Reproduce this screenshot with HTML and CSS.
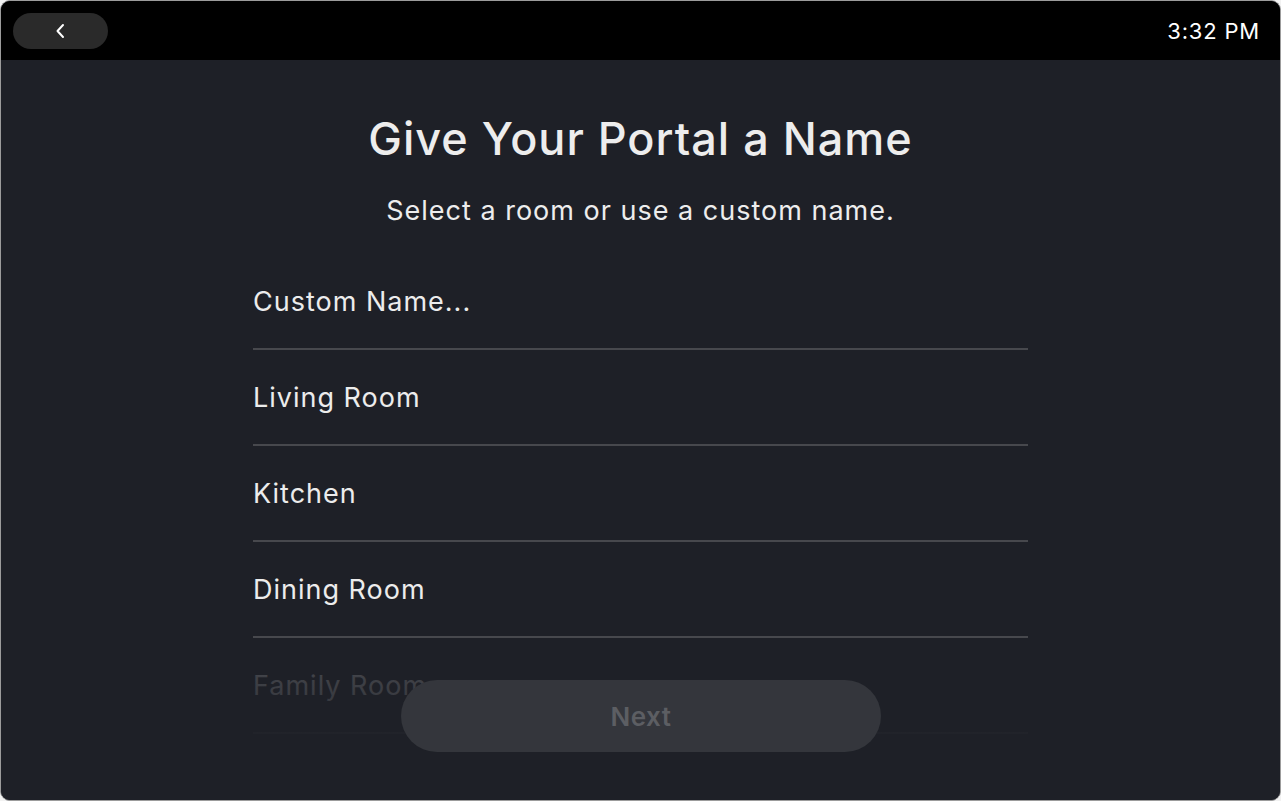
FILE: index.html
```html
<!DOCTYPE html>
<html lang="en">
<head>
    <meta charset="UTF-8">
    <meta name="viewport" content="width=device-width, initial-scale=1.0">
    <title>Give Your Portal a Name</title>
    <link rel="stylesheet" href="styles.css">
</head>
<body>
    <div class="screen">
        <!-- Status bar -->
        <div class="topbar">
            <button class="back-btn" aria-label="Back">
                <svg width="12" height="16" viewBox="0 0 12 16">
                    <path d="M8 2 L2.5 8 L8 14" fill="none" stroke="#fff" stroke-width="2" stroke-linecap="round" stroke-linejoin="round"/>
                </svg>
            </button>
            <span class="clock">3:32 PM</span>
        </div>

        <!-- Main content -->
        <div class="content">
            <h1 class="title">Give Your Portal a Name</h1>
            <p class="subtitle">Select a room or use a custom name.</p>

            <ul class="room-list">
                <li>Custom Name...</li>
                <li>Living Room</li>
                <li>Kitchen</li>
                <li>Dining Room</li>
                <li>Family Room</li>
            </ul>

            <div class="fade"></div>
            <button class="next-btn" disabled>Next</button>
        </div>
    </div>
</body>
</html>
```

FILE: styles.css
```css
/* General */
body {
    margin: 0;
    background-color: #f2f2f2;
    font-family: Inter, "Noto Sans", sans-serif;
    color: #ececec;
}

.screen {
    width: 1281px;
    height: 801px;
    box-sizing: border-box;
    border: 1px solid #9c9c9c;
    border-radius: 10px;
    overflow: hidden;
    display: flex;
    flex-direction: column;
    background-color: #1e2027;
}

/* Status bar */
.topbar {
    height: 59px;
    flex-shrink: 0;
    background-color: #000;
    display: flex;
    align-items: center;
    justify-content: space-between;
    padding: 0 20px 0 12px;
}

.back-btn {
    width: 95px;
    height: 36px;
    border: none;
    border-radius: 18px;
    background-color: #2a2a2a;
    display: flex;
    align-items: center;
    justify-content: center;
    padding: 0;
    cursor: pointer;
}

.clock {
    font-size: 22px;
    color: #fff;
    letter-spacing: 0.8px;
}

/* Content */
.content {
    position: relative;
    flex: 1;
    display: flex;
    flex-direction: column;
    align-items: center;
    overflow: hidden;
}

.title {
    margin: 51px 0 0;
    font-size: 45px;
    line-height: 56px;
    font-weight: 500;
    color: #ededed;
    letter-spacing: 1px;
}

.subtitle {
    margin: 26px 0 0;
    font-size: 27px;
    line-height: 36px;
    color: #ededed;
    letter-spacing: 1px;
}

.room-list {
    list-style: none;
    margin: 25px 0 0;
    padding: 0;
    width: 775px;
}

.room-list li {
    height: 94px;
    display: flex;
    align-items: center;
    font-size: 27px;
    letter-spacing: 1px;
    border-bottom: 2px solid #47484d;
}

.fade {
    position: absolute;
    left: 0;
    right: 0;
    bottom: 0;
    height: 162px;
    background: linear-gradient(to bottom,
        rgba(30, 32, 39, 0) 0,
        rgba(30, 32, 39, 0.84) 38px,
        rgba(30, 32, 39, 0.93) 100px,
        rgba(30, 32, 39, 1) 100%);
}

.next-btn {
    position: absolute;
    left: 400px;
    bottom: 48px;
    width: 480px;
    height: 72px;
    border: none;
    border-radius: 36px;
    background-color: #34363c;
    color: #5c5e63;
    font-family: Inter, "Noto Sans", sans-serif;
    font-size: 26px;
    font-weight: 600;
    letter-spacing: 0.5px;
}
```
